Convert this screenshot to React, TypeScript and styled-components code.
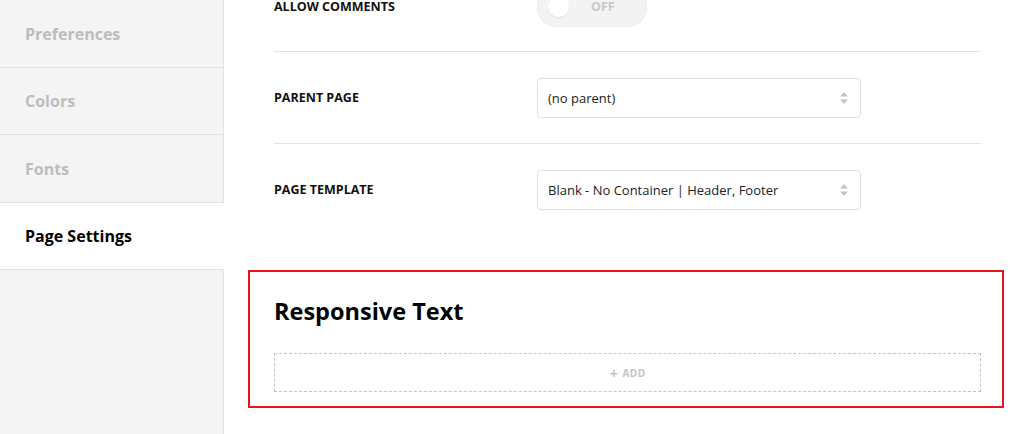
import styled, { createGlobalStyle } from "styled-components";

const GlobalStyle = createGlobalStyle`
  html, body {
    margin: 0;
    padding: 0;
    height: 100%;
    overflow: hidden;
    background: #fff;
    font-family: "Open Sans", "Noto Sans", Arial, sans-serif;
  }
  #root {
    height: 100%;
  }
`;

const menu = ["Preferences", "Colors", "Fonts", "Page Settings"];

const App = () => {
  const active = "Page Settings";
  return (
    <>
      <GlobalStyle />
      <Layout>
        <Sidebar>
          {menu.map((item) => (
            <MenuItem key={item} $active={item === active}>
              {item}
            </MenuItem>
          ))}
          <SidebarFill />
        </Sidebar>
        <Main>
          <Row $height={90}>
            <Label>Allow Comments</Label>
            <Toggle>
              <Knob />
              <ToggleText>OFF</ToggleText>
            </Toggle>
          </Row>
          <Row>
            <Label>Parent Page</Label>
            <Select value="(no parent)" />
          </Row>
          <Row $last>
            <Label>Page Template</Label>
            <Select value="Blank - No Container | Header, Footer" />
          </Row>
          <Widget>
            <WidgetTitle>Responsive Text</WidgetTitle>
            <AddZone>
              <Plus>+</Plus> ADD
            </AddZone>
          </Widget>
        </Main>
      </Layout>
    </>
  );
};

const Select = ({ value }: { value: string }) => (
  <SelectBox>
    <span>{value}</span>
    <svg width="10" height="14" viewBox="0 0 10 14">
      <path d="M5 1 L9 5.5 H1 Z" fill="#c4c4c4" />
      <path d="M5 13 L9 8.5 H1 Z" fill="#c4c4c4" />
    </svg>
  </SelectBox>
);

export default App;

const Layout = styled.div`
  display: flex;
  height: 100%;
`;

const Sidebar = styled.nav`
  width: 224px;
  flex-shrink: 0;
  display: flex;
  flex-direction: column;
  background: #f4f4f4;
`;

const MenuItem = styled.div<{ $active?: boolean }>`
  height: 67px;
  box-sizing: border-box;
  display: flex;
  align-items: center;
  padding-left: 25px;
  font-size: 16px;
  font-weight: 700;
  color: ${(p) => (p.$active ? "#000" : "#bdbdbd")};
  background: ${(p) => (p.$active ? "#fff" : "#f4f4f4")};
  border-bottom: 1px solid #e2e2e2;
  border-right: 1px solid ${(p) => (p.$active ? "#fff" : "#e2e2e2")};
  &:first-child {
    height: 68px;
  }
  &:nth-child(3) {
    height: 68px;
  }
`;

const SidebarFill = styled.div`
  flex: 1;
  border-right: 1px solid #e2e2e2;
`;

const Main = styled.main`
  flex: 1;
  padding: 0 36px 0 50px;
  margin-top: -38px;
`;

const Row = styled.div<{ $last?: boolean; $height?: number }>`
  height: ${(p) => p.$height ?? 92}px;
  box-sizing: border-box;
  display: flex;
  align-items: center;
  border-bottom: 1px solid ${(p) => (p.$last ? "transparent" : "#e4e4e4")};
`;

const Label = styled.div`
  width: 263px;
  font-size: 12.5px;
  font-weight: 700;
  text-transform: uppercase;
  color: #111;
`;

const Toggle = styled.div`
  width: 110px;
  height: 40px;
  border-radius: 20px;
  background: #f3f3f3;
  box-shadow: inset 0 0 0 1px #ececec;
  display: flex;
  align-items: center;
`;

const Knob = styled.div`
  width: 21px;
  height: 21px;
  border-radius: 50%;
  background: #fff;
  margin-left: 11px;
  box-shadow: 0 1px 2px rgba(0, 0, 0, 0.08);
`;

const ToggleText = styled.span`
  margin-left: 22px;
  font-size: 12.5px;
  font-weight: 700;
  color: #c8c8c8;
`;

const SelectBox = styled.div`
  width: 324px;
  height: 40px;
  box-sizing: border-box;
  border: 1px solid #dedede;
  border-radius: 4px;
  display: flex;
  align-items: center;
  justify-content: space-between;
  padding: 0 11px 0 10px;
  font-size: 13px;
  color: #222;
`;

const Widget = styled.section`
  margin: 34px -23px 0 -26px;
  border: 2px solid #e8141b;
  padding: 21px 21px 14px 24px;
`;

const WidgetTitle = styled.h2`
  margin: 0 0 24px;
  font-size: 23.5px;
  font-weight: 700;
  color: #000;
  line-height: 36px;
`;

const AddZone = styled.div`
  height: 39px;
  box-sizing: border-box;
  border: 1px dashed #c4c4c4;
  display: flex;
  align-items: center;
  justify-content: center;
  font-size: 10px;
  font-weight: 700;
  color: #c4c4c4;
  letter-spacing: 0.4px;
`;

const Plus = styled.span`
  font-size: 15px;
  margin-right: 4px;
`;
